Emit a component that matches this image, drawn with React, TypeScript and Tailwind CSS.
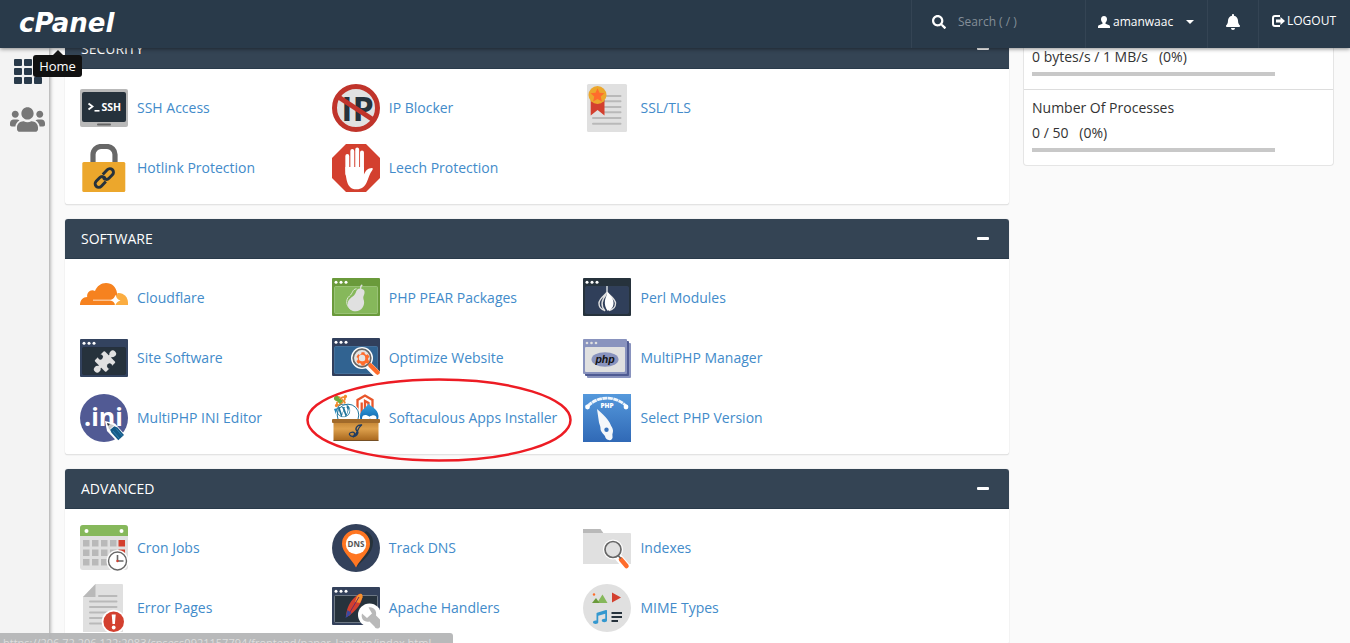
import type { ReactNode } from "react";
import { FaBell, FaCog, FaJoomla, FaMusic, FaSearch, FaUsers, FaWordpressSimple } from "react-icons/fa";

function Icon({ children }: { children: ReactNode }) {
  return (
    <svg viewBox="0 0 48 48" className="size-12 shrink-0" aria-hidden="true">
      {children}
    </svg>
  );
}

function WindowFrame({ top, frame, inner, edge }: { top: number; frame: string; inner: string; edge: string }) {
  return (
    <>
      <rect x="0" y={top} width="48" height="38" rx="1" fill={frame} />
      <rect x="2.5" y={top + 8.5} width="43" height="27" rx="1" fill={inner} stroke={edge} strokeWidth="0.7" />
      <g fill="#fff">
        <circle cx="4" cy={top + 4.3} r="1.5" />
        <circle cx="9" cy={top + 4.3} r="1.5" />
        <circle cx="14" cy={top + 4.3} r="1.5" />
      </g>
    </>
  );
}

const SshIcon = () => (
  <Icon>
    <rect y="5" width="48" height="38" rx="2" fill="#b9b9b9" />
    <rect x="2" y="8" width="44" height="30" rx="2" fill="#26323c" />
    <rect x="17" y="39.5" width="14" height="2" rx="1" fill="#666" />
    <path d="M8.500 19.500l4 3-4 3" fill="none" stroke="#fff" strokeWidth="1.800" />
    <path d="M14.500 26.800h5" stroke="#fff" strokeWidth="1.600" />
    <text x="21.500" y="26.500" fontSize="10.500" fontWeight="700" fill="#fff">SSH</text>
  </Icon>
);

const LockIcon = () => (
  <Icon>
    <path d="M13 19v-8.500a8 8 0 0 1 8-8h6a8 8 0 0 1 8 8V19" fill="none" stroke="#676767" strokeWidth="5.200" />
    <rect x="2.300" y="18" width="43" height="30" rx="1.500" fill="#eca72c" />
    <g transform="translate(24.300 34) rotate(-46)" fill="none" stroke="#26323c" strokeWidth="2.900">
      <path d="M-1.500 3.600h-6.500a3.600 3.600 0 0 1 0-7.200h5a3.600 3.600 0 0 1 3.500 4.500" />
      <path d="M1.500-3.600h6.500a3.600 3.600 0 0 1 0 7.200h-5a3.600 3.600 0 0 1-3.500-4.500" />
    </g>
  </Icon>
);

const BlockerIcon = () => (
  <Icon>
    <circle cx="24" cy="24" r="21.500" fill="#e1e1e1" />
    <text x="25.500" y="37" textAnchor="middle" fontSize="34" fontWeight="700" fill="#26323c">IP</text>
    <circle cx="24" cy="24" r="21.500" fill="none" stroke="#c0342b" strokeWidth="5" />
    <path d="M6.500 13l35 23" stroke="#c0342b" strokeWidth="5" />
  </Icon>
);

const StopIcon = () => (
  <Icon>
    <path d="M14 0h20l14 14v20L34 48H14L0 34V14z" fill="#d3402f" />
    <g stroke="#fff" strokeLinecap="round" strokeWidth="3.900">
      <path d="M15.300 12v18M20.300 7v20M25.200 5.500v20M30 8.500v20" />
    </g>
    <path d="M13.350 23h18.600v7.500c2-4.500 3.800-6 8-6.500 1.200.2 1 1.300.3 2.200-2.800 3.500-3.600 8-5.400 11.800-2.200 4.800-5.400 7.300-10.200 7.300-6.200 0-8.700-3.500-10-9.300-.8-4-1.300-8-1.300-13z" fill="#fff" />
  </Icon>
);

const CertificateIcon = () => (
  <Icon>
    <rect x="4" width="40" height="48" rx="1.500" fill="#e0e0e0" />
    <path d="M20 12h17.500M20 17.300h17.500M20 23h17.500M20 28.300h17.500M10 34h27.500M10 39.700h27.500" stroke="#b9b9b9" strokeWidth="2" strokeLinecap="round" />
    <path d="M7.700 16h13.800v15.500L14.600 26l-6.900 5.500z" fill="#d3402f" />
    <circle cx="14.500" cy="11" r="9" fill="#eca72c" />
    <path d="M14.500 4.200l2 4.600 5 .5-3.800 3.300 1.200 4.900-4.400-2.600-4.400 2.600 1.200-4.900-3.800-3.300 5-.5z" fill="#ff6c2c" />
  </Icon>
);

const CloudIcon = () => (
  <Icon>
    <path d="M0 31c0-5 3-8 7.200-8C6.500 18 11 14.500 15 17c2-5 6-8 11-8 6 0 10.200 4 11 10 .3 2.500-1 4-1.500 12z" fill="#f6821f" />
    <path d="M37.500 19c6-.6 10.500 4 10.500 9.500V31H34z" fill="#fbad41" />
    <path d="M13 25.700h18c2.500-.6 3.600-2.600 4.500-5 .8 3.300 2.200 5 5 5.700-2.800.8-4.200 2.200-5 4.800-.9-2.800-2.400-4.600-5.500-4.800H13z" fill="#fff" />
  </Icon>
);

const PearIcon = () => (
  <Icon>
    <WindowFrame top={4} frame="#6a9a3b" inner="#86b85b" edge="#a8cd89" />
    <path d="M24.500 14.800c-4.300.2-3.500 4.500-7 7.200-4.700 3.700-3.400 12 3.200 14" fill="none" stroke="#dfe8d8" strokeWidth="1" />
    <path d="M29.500 10.500c1.200.4 1.400 1 .6 1.600-.7.600-.8 1.600-.8 2.700 4 .8 3.800 4.300 2.300 7.200-.7 1.400-.1 3 .3 4.600 1.200 5-2.300 10.700-8.200 10.700-5 0-8.200-3.400-8-7.800.3-6 6.700-6.200 8.100-11 .8-2.700 2-3.900 4.300-4-.1-1.600.1-3 1.400-4z" fill="#e0e0e0" />
  </Icon>
);

const OnionIcon = () => (
  <Icon>
    <WindowFrame top={4} frame="#26323c" inner="#303f5a" edge="#34435e" />
    <path d="M24 12v8" stroke="#aab2bd" strokeWidth="2" />
    <path d="M24 18c-1 3-8 6-8 11.500 0 3.500 2 6 6 7M24 18c1 3 8.500 6 8.500 11.500 0 3.500-2.500 6-6.500 7M23.500 20c-5 6-6 12-1.500 17" fill="none" stroke="#e0e0e0" strokeWidth="1.400" />
    <path d="M24.500 18c3.500 4 6.500 7.500 6 12-.3 3.500-2.500 6-6 6.800-2-3-3.200-6.500-2.500-10.500.5-3 2-5 2.500-8.300z" fill="#fff" />
  </Icon>
);

const PuzzleIcon = () => (
  <Icon>
    <WindowFrame top={5} frame="#33435f" inner="#26323c" edge="#222d36" />
    <g transform="translate(25 27.500) rotate(45)" fill="#e0e0e0">
      <rect x="-8" y="-7" width="16" height="14" rx="1" />
      <circle cy="-11" r="3.300" />
      <circle cy="11" r="3.300" />
      <path d="M-1.700-9h3.400v18h-3.400z" />
    </g>
    <g transform="translate(25 27.500) rotate(45)" fill="#26323c">
      <circle cx="-6.500" r="2.600" />
      <circle cx="6.500" r="2.600" />
    </g>
  </Icon>
);

const OptimizeIcon = () => (
  <Icon>
    <WindowFrame top={4} frame="#313f5c" inner="#316391" edge="#4d7eaa" />
    <path d="M36 31l9 9" stroke="#fff" strokeWidth="7.500" strokeLinecap="round" />
    <circle cx="30" cy="24" r="11" fill="#fff" />
    <circle cx="30" cy="24" r="8.800" fill="#e4e4e4" stroke="#676767" strokeWidth="1.700" />
    <path d="M38.500 31.500l7 7" stroke="#ff6c2c" strokeWidth="4.500" strokeLinecap="round" />
    <FaCog x="24" y="18" width="12" height="12" color="#ff6c2c" />
    <circle cx="30" cy="24" r="3.200" fill="#e4e4e4" />
  </Icon>
);

const PhpIcon = () => (
  <Icon>
    <rect x="4" y="9" width="44" height="35" rx="1" fill="#8993be" />
    <rect x="2" y="7" width="44" height="35" rx="1" fill="#4f5b93" />
    <rect y="5" width="44" height="35" rx="1" fill="#8993be" />
    <rect x="2" y="13" width="40" height="25" rx="1" fill="#e0e0e0" />
    <g fill="#e0e0e0">
      <circle cx="4" cy="9" r="1.300" />
      <circle cx="8.500" cy="9" r="1.300" />
      <circle cx="13" cy="9" r="1.300" />
    </g>
    <ellipse cx="22" cy="25.500" rx="13.500" ry="7.300" fill="#8993be" />
    <text x="22" y="28.500" textAnchor="middle" fontSize="10.500" fontWeight="700" fontStyle="italic" fill="#111" fontFamily="Liberation Sans">php</text>
  </Icon>
);

const IniIcon = () => (
  <Icon>
    <circle cx="24" cy="24" r="24" fill="#515a94" />
    <text x="23.500" y="32" textAnchor="middle" fontSize="25" fontWeight="700" fill="#fff">.ini</text>
    <path d="M25 27l10 2.500L46 42l-7.500 7L27 37z" fill="#fff" />
    <path d="M27 29l7 2.200-4.800 4.600z" fill="#c9c9c9" />
    <path d="M27 29l3 1-2 2z" fill="#26323c" />
    <path d="M34.300 32.200l3.200 1.300L44 41l-5.700 5.200-6.800-7.400-1.400-3z" fill="#165a86" />
    <path d="M36 34.500l6.500 7.500M33 37l6.500 7.700" stroke="#3287b9" strokeWidth="0.800" />
  </Icon>
);

const ToolboxIcon = () => (
  <Icon>
    <defs>
      <linearGradient id="wood" x1="0" y1="0" x2="0" y2="1">
        <stop offset="0" stopColor="#c18232" />
        <stop offset="0.400" stopColor="#dda04c" />
        <stop offset="1" stopColor="#a8671d" />
      </linearGradient>
      <linearGradient id="drop" x1="0" y1="0" x2="0" y2="1">
        <stop offset="0" stopColor="#3aa5e0" />
        <stop offset="1" stopColor="#0a5fa8" />
      </linearGradient>
    </defs>
    <FaJoomla x="2" y="0" width="20" height="20" color="#f28a2e" />
    <path d="M2 3.500c2-2.500 5-1.500 5 .5l4 3-3 3-3-3C3 7 1.500 5.500 2 3.500z" fill="#6cab3e" />
    <path d="M2 15l4-1 4 12H6z" fill="#2388bd" />
    <path d="M25.500 20V6L33 1.500 40.500 6v9M29.700 20V8.500M33 18V7l3.500 2v6" fill="none" stroke="#e8562b" strokeWidth="2.300" />
    <circle cx="16" cy="21" r="12" fill="#fff" />
    <FaWordpressSimple x="4.500" y="9.500" width="23" height="23" color="#21759b" />
    <circle cx="16" cy="21" r="10.800" fill="none" stroke="#21759b" strokeWidth="1" />
    <path d="M36.500 9.500c1.500 3 9.500 5 10 12.500 0 3-1 5-2 6H29.500c-1-1.500-1.500-3-1.500-5.500 0-7 7-9 8.500-13z" fill="url(#drop)" />
    <path d="M30 24.500c0-4 4-4.500 7.500-1.800 3-2.300 7-2 7 1.300 0 3.500-4 3-6.500.5-3 3-8 3.500-8 0z" fill="#fff" />
    <rect x="1.500" y="27" width="45" height="19.500" fill="url(#wood)" />
    <rect y="25" width="48" height="4" rx="1" fill="#a16a2a" />
    <path d="M1.500 46.500h45" stroke="#765025" strokeWidth="1" />
    <path d="M30 31c-5-.5-8 4-4.500 6.500 1.500 2-2 5.500-4.500 5-3.500-.5-5-3-2-4 3-1 5 1 2.500 3.500M21 43c4-1 4-9 9-12.500" fill="none" stroke="#203c61" strokeWidth="1.300" />
  </Icon>
);

const GaugeIcon = () => (
  <Icon>
    <defs>
      <linearGradient id="gauge" x1="0" y1="0" x2="0" y2="1">
        <stop offset="0" stopColor="#5599dc" />
        <stop offset="1" stopColor="#3069b6" />
      </linearGradient>
    </defs>
    <rect width="48" height="48" fill="url(#gauge)" />
    <path d="M5 12C15 1.500 33 1.500 43 12" fill="none" stroke="#eef5fc" strokeWidth="2.800" strokeDasharray="5 0.500" />
    <circle cx="4.500" cy="13" r="2.400" fill="#fff" />
    <circle cx="43" cy="13" r="2.400" fill="#fff" />
    <text x="24" y="13.500" textAnchor="middle" fontSize="6.500" fontWeight="800" fill="#fff">PHP</text>
    <path d="M14 15c6 5 12 11 13.500 15.500.8 2 2.300 3.500 2.500 6 .2 2-1 3.500-.5 5.500.6 2.500-1 4.200-3 4.200s-4.500-2-4.500-4.200c-1.700-2.300-4.700-4.500-4.500-7.500.1-2-1-4-1.500-6z" fill="#f4f7fa" />
    <circle cx="23.500" cy="35.800" r="2.200" fill="#3a74bd" />
  </Icon>
);

const CalendarIcon = () => (
  <Icon>
    <rect y="1" width="48" height="45" rx="3" fill="#e0e0e0" />
    <path d="M0 12V4a3 3 0 0 1 3-3h42a3 3 0 0 1 3 3v8z" fill="#86b85b" />
    <circle cx="6.500" cy="7" r="2" fill="#fff" />
    <circle cx="41.500" cy="7" r="2" fill="#fff" />
    <path d="M3 16h6.500v6.500H3zm9 0h6.500v6.500H12zm9 0h6.500v6.500H21zm9 0h6.500v6.500H30zM3 25.500h6.500V32H3zm9 0h6.500V32H12zm9 0h6.500V32H21zm9 0h6.500V32H30zM3 35h6.500v6.500H3zm9 0h6.500v6.500H12zm9 0h6.500v6.500H21z" fill="#b9b9b9" />
    <path d="M38.500 16H45v6.500h-6.500zm0 9.500H45V32h-6.500z" fill="#d3402f" />
    <circle cx="37.500" cy="37" r="11" fill="#fff" />
    <circle cx="37.500" cy="37" r="9" fill="#fff" stroke="#676767" strokeWidth="1.400" />
    <path d="M37.500 31v6h6" fill="none" stroke="#676767" strokeWidth="1.600" />
    <circle cx="37.500" cy="37" r="1.200" fill="#d3402f" />
  </Icon>
);

const PinIcon = () => (
  <Icon>
    <circle cx="24" cy="24" r="24" fill="#33415b" />
    <path d="M25 43c6-8 16-13 16-25 0-5-3-9-7-11l-7 8z" fill="#26323c" />
    <path d="M24 43.500C19 34 10 28 10 20a14 14 0 0 1 28 0c0 8-9 14-14 23.500z" fill="#ff7622" />
    <circle cx="24" cy="20" r="10.200" fill="#fff" />
    <text x="24" y="23" textAnchor="middle" fontSize="8" fontWeight="700" fill="#555">DNS</text>
  </Icon>
);

const IndexIcon = () => (
  <Icon>
    <path d="M0 10V5h17.500L21 10z" fill="#b9b9b9" />
    <path d="M0 9h47a1 1 0 0 1 1 1v30H0z" fill="#e0e0e0" />
    <path d="M36 34l7 8" stroke="#fff" strokeWidth="7.500" strokeLinecap="round" />
    <circle cx="30" cy="25.500" r="10" fill="#fff" />
    <circle cx="30" cy="25.500" r="8" fill="#e0e0e0" stroke="#676767" strokeWidth="1.700" />
    <path d="M38 35.500l5.500 6.500" stroke="#ff6c2c" strokeWidth="4.500" strokeLinecap="round" />
    <path d="M35 31.500l3 3" stroke="#676767" strokeWidth="1.700" />
  </Icon>
);

const ErrorIcon = () => (
  <Icon>
    <path d="M15.500 0H42a1 1 0 0 1 1 1v47H3V13z" fill="#e0e0e0" />
    <path d="M15.500 0v13H3z" fill="#b9b9b9" />
    <path d="M19 12h17.500M10 17.500h26.500M10 23h26.500M10 28.500h26.500M10 34h15M10 39.500h12" stroke="#b9b9b9" strokeWidth="2" strokeLinecap="round" />
    <circle cx="33.700" cy="37.700" r="12" fill="#fff" />
    <circle cx="33.700" cy="37.700" r="10.300" fill="#d3402f" />
    <path d="M31.700 30.500h4l-.8 9.500h-2.400z" fill="#fff" />
    <circle cx="33.700" cy="43.500" r="1.900" fill="#fff" />
  </Icon>
);

const ApacheIcon = () => (
  <Icon>
    <WindowFrame top={3} frame="#33415b" inner="#26323c" edge="#8a949d" />
    <path d="M14 32c1-9 4-16 13-22 3-1 4 2 3 5-2 7-7 12-13 17z" fill="#d3402f" />
    <path d="M25 12c4-4 6-2 5.500 1.500L28 19l-5-1z" fill="#f7912d" />
    <path d="M27 13L15 33" stroke="#6b2a68" strokeWidth="1" />
    <path d="M13.500 34l2-8 4 3-3 3z" fill="#3a4aa0" />
    <circle cx="37.500" cy="31" r="11.500" fill="#fff" />
    <path d="M34 38l8 8h6V28z" fill="#fff" />
    <path d="M37 22.500c5-1 8.500 3 7.500 8l4 4V42a3 3 0 0 1-5.500-.5L38 36.500c-5 1.200-9-2.500-7.500-8l5 4.500 5-4.500z" transform="translate(-.5 1)" fill="#b9b9b9" />
  </Icon>
);

const MimeIcon = () => (
  <Icon>
    <circle cx="24" cy="24" r="24" fill="#e0e0e0" />
    <path d="M14 19l5.500-8.500L24.500 19z" fill="#86b85b" />
    <path d="M9 19l4-5 3.500 5z" fill="#6a9a3b" />
    <circle cx="11" cy="10.500" r="1.200" fill="#ff6c2c" />
    <path d="M29 8.500l9 5-9 5z" fill="#d3402f" />
    <FaMusic x="10" y="26" width="12.500" height="12.500" color="#3498cf" />
    <path d="M28.500 29H39M28.500 33H39M28.500 37h6.500" stroke="#26323c" strokeWidth="2" />
  </Icon>
);

type App = { name: string; icon: ReactNode; marked?: boolean };

const groups: { title: string; apps: App[] }[] = [
  {
    title: "SECURITY",
    apps: [
      { name: "SSH Access", icon: <SshIcon /> },
      { name: "IP Blocker", icon: <BlockerIcon /> },
      { name: "SSL/TLS", icon: <CertificateIcon /> },
      { name: "Hotlink Protection", icon: <LockIcon /> },
      { name: "Leech Protection", icon: <StopIcon /> },
    ],
  },
  {
    title: "SOFTWARE",
    apps: [
      { name: "Cloudflare", icon: <CloudIcon /> },
      { name: "PHP PEAR Packages", icon: <PearIcon /> },
      { name: "Perl Modules", icon: <OnionIcon /> },
      { name: "Site Software", icon: <PuzzleIcon /> },
      { name: "Optimize Website", icon: <OptimizeIcon /> },
      { name: "MultiPHP Manager", icon: <PhpIcon /> },
      { name: "MultiPHP INI Editor", icon: <IniIcon /> },
      { name: "Softaculous Apps Installer", icon: <ToolboxIcon />, marked: true },
      { name: "Select PHP Version", icon: <GaugeIcon /> },
    ],
  },
  {
    title: "ADVANCED",
    apps: [
      { name: "Cron Jobs", icon: <CalendarIcon /> },
      { name: "Track DNS", icon: <PinIcon /> },
      { name: "Indexes", icon: <IndexIcon /> },
      { name: "Error Pages", icon: <ErrorIcon /> },
      { name: "Apache Handlers", icon: <ApacheIcon /> },
      { name: "MIME Types", icon: <MimeIcon /> },
    ],
  },
];

function Group({ title, apps }: { title: string; apps: App[] }) {
  return (
    <section className="rounded-[3px] border-b border-[#e3e3e3] bg-white shadow-[0_0_1px_#bbb]">
      <div className="flex h-10 items-center justify-between rounded-t-[3px] border-b border-[#293a4a] bg-[#344454] pr-5 pl-4">
        <h2 className="text-white">{title}</h2>
        <button type="button" aria-label={"Collapse " + title} className="h-[3px] w-3 rounded-[1px] bg-white" />
      </div>
      <ul className="ml-[15px] grid w-4/5 grid-cols-3 gap-y-3 pt-[15px] pb-3">
        {apps.map((app) => (
          <li key={app.name} className="relative">
            <a href="#" className="flex items-center gap-[9px] whitespace-nowrap text-[#428bca]">
              {app.icon}
              {app.name}
            </a>
            {app.marked && (
              <svg viewBox="0 0 268 86" className="pointer-events-none absolute -top-[17px] -left-[27px] h-[86px] w-[268px]" aria-hidden="true">
                <ellipse cx="134" cy="43" rx="131.500" ry="40.500" fill="none" stroke="#ed1c24" strokeWidth="2.500" />
              </svg>
            )}
          </li>
        ))}
      </ul>
    </section>
  );
}

const Meter = () => <div className="mt-[5px] h-1 w-[83%] bg-[#c8c8c8]" />;

export default function App() {
  return (
    <div className="relative flex h-screen flex-col overflow-hidden bg-[#fafafa] font-['Open_Sans',sans-serif] text-sm leading-5 text-[#333]">
      <header className="relative z-10 flex h-12 shrink-0 items-stretch bg-[#293a4a] text-xs text-white shadow-[0_1px_4px_rgba(0,0,0,0.45)]">
        <a href="#" className="flex flex-1 items-center pb-[2px] pl-[19px] font-['DejaVu_Sans',sans-serif] text-[26px] font-bold italic">
          cPanel
        </a>
        <label className="flex w-[174px] items-center gap-3 border-l border-[#344454] pb-1 pl-5">
          <FaSearch size={14} />
          <input aria-label="Search" placeholder="Search ( / )" className="w-28 bg-transparent outline-none placeholder:text-[#848e98]" />
        </label>
        <button type="button" className="flex w-[122px] items-center border-l border-[#344454] pb-1 pl-3">
          <svg viewBox="0 0 12 12" className="mr-[3px] size-3" fill="currentColor" aria-hidden="true">
            <path d="M6 0c2 0 3 1.300 3 3.300 0 1.500-.8 2.600-1.500 3.500v.9l3.700 1.600c.6.300.8.800.8 1.400V12H0v-1.300c0-.6.200-1.100.8-1.400l3.700-1.600v-.9C3.800 5.900 3 4.800 3 3.300 3 1.300 4 0 6 0z" />
          </svg>
          amanwaac
          <svg viewBox="0 0 8 4" className="ml-[13px] h-1 w-2" fill="currentColor" aria-hidden="true">
            <path d="M0 0h8L4 4z" />
          </svg>
        </button>
        <button type="button" aria-label="Notifications" className="flex w-[51px] items-center justify-center border-l border-[#344454] pb-1">
          <FaBell size={16} />
        </button>
        <a href="#" className="flex w-[92px] items-center gap-[2px] border-l border-[#344454] pb-[6px] pl-[13px]">
          <svg viewBox="0 0 13 12" className="h-3 w-[13px]" aria-hidden="true">
            <path d="M8 1H3a2 2 0 0 0-2 2v6a2 2 0 0 0 2 2h5" fill="none" stroke="#fff" strokeWidth="2" />
            <path d="M4 4.500h4.500V2L13 6l-4.500 4V7.500H4z" fill="#fff" />
          </svg>
          LOGOUT
        </a>
      </header>

      <div className="flex min-h-0 flex-1">
        <nav className="relative flex w-[49px] shrink-0 flex-col bg-[#f3f3f3] shadow-[1px_0_4px_rgba(0,0,0,0.4)]">
          <a href="#" aria-label="Home" className="mt-[11px] ml-[14px] text-[#293a4a]">
            <svg viewBox="0 0 28 25" className="h-[25px] w-7" fill="currentColor" aria-hidden="true">
              {[0, 9, 18].map((y) =>
                [0, 10, 20].map((x) => <rect key={x + "-" + y} x={x} y={y} width="8" height="7" rx="1" />),
              )}
            </svg>
          </a>
          <a href="#" aria-label="User Manager" className="mt-[18px] ml-[10px] text-[#777]">
            <FaUsers size={35} />
          </a>
          <div role="tooltip" className="absolute top-[2px] left-[33px] z-20 flex w-[49px] flex-col items-center">
            <svg viewBox="0 0 10 5" className="h-[5px] w-[10px]" aria-hidden="true">
              <path d="M5 0l5 5H0z" fill="#151515" />
            </svg>
            <span className="w-full rounded-[3px] bg-[#111] py-[1px] text-center text-[13px] text-white">Home</span>
          </div>
        </nav>

        <main className="-mt-[19px] grid min-w-0 flex-1 grid-cols-[minmax(0,944fr)_minmax(0,311fr)] items-start gap-[14px] pr-4 pl-4">
          <div className="flex flex-col gap-[14px]">
            {groups.map((group) => (
              <Group key={group.title} title={group.title} apps={group.apps} />
            ))}
          </div>
          <aside className="rounded-b-[4px] border border-t-0 border-[#e5e5e5] bg-white">
            <div className="border-b border-[#ddd] px-2 pt-[18px] pb-[13px]">
              <p>0 bytes/s / 1 MB/s &nbsp; (0%)</p>
              <Meter />
            </div>
            <div className="px-2 pt-2 pb-[13px]">
              <p>Number Of Processes</p>
              <p className="mt-[5px]">0 / 50 &nbsp; (0%)</p>
              <Meter />
            </div>
          </aside>
        </main>
      </div>

      <div className="absolute bottom-0 left-0 z-30 h-[10px] w-[453px] overflow-hidden rounded-tr-[3px] bg-[#b4b5b6]/95 pl-[3px] text-[11px] leading-5 whitespace-nowrap text-[#dedede]">
        https://206.72.206.122:2083/cpsess0921157794/frontend/paper_lantern/index.html
      </div>
    </div>
  );
}
